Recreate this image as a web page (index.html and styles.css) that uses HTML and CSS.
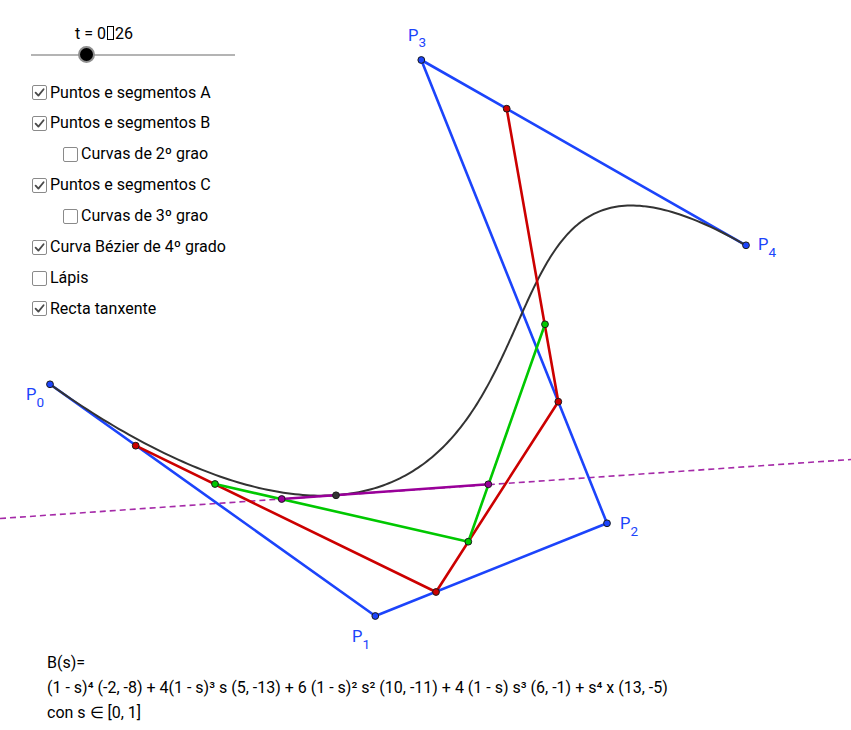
FILE: index.html
```html
<!DOCTYPE html>
<html lang="gl">
<head>
<meta charset="utf-8">
<title>Curva Bézier de 4º grado</title>
<link rel="stylesheet" href="styles.css">
</head>
<body>
<div class="stage">
  <svg class="canvas" viewBox="0 0 851 730" width="851" height="730" xmlns="http://www.w3.org/2000/svg">
    <line class="tangent" x1="0" y1="518.5" x2="851" y2="459.5"/>
    <polyline class="seg seg-blue" points="50,384.3 375.3,616 607,523.3 421.3,60 746,245.3"/>
    <path id="curve" class="curve" d=""/>
    <polyline class="seg seg-red" points="135.7,445.7 436,592 558.3,401.7 506.7,108.7"/>
    <polyline class="seg seg-green" points="215,484 468.3,541.7 545,324.3"/>
    <line class="seg seg-purple" x1="281.7" y1="499" x2="488.3" y2="484.3"/>

    <g class="pts pts-blue">
      <circle cx="50" cy="384.3" r="3.4"/>
      <circle cx="375.3" cy="616" r="3.4"/>
      <circle cx="607" cy="523.3" r="3.4"/>
      <circle cx="421.3" cy="60" r="3.4"/>
      <circle cx="746" cy="245.3" r="3.4"/>
    </g>
    <g class="pts pts-red">
      <circle cx="135.7" cy="445.7" r="3.4"/>
      <circle cx="436" cy="592" r="3.4"/>
      <circle cx="558.3" cy="401.7" r="3.4"/>
      <circle cx="506.7" cy="108.7" r="3.4"/>
    </g>
    <g class="pts pts-green">
      <circle cx="215" cy="484" r="3.4"/>
      <circle cx="468.3" cy="541.7" r="3.4"/>
      <circle cx="545" cy="324.3" r="3.4"/>
    </g>
    <g class="pts pts-purple">
      <circle cx="281.7" cy="499" r="3.4"/>
      <circle cx="488.3" cy="484.3" r="3.4"/>
    </g>
    <g class="pts pts-black">
      <circle cx="336" cy="495.3" r="3.4"/>
    </g>

    <text class="lbl" x="26" y="400">P<tspan class="sub" dy="6.5">0</tspan></text>
    <text class="lbl" x="352" y="642">P<tspan class="sub" dy="6.5">1</tspan></text>
    <text class="lbl" x="620" y="529.3">P<tspan class="sub" dy="6.5">2</tspan></text>
    <text class="lbl" x="408" y="40.7">P<tspan class="sub" dy="6.5">3</tspan></text>
    <text class="lbl" x="758" y="250">P<tspan class="sub" dy="6.5">4</tspan></text>
  </svg>

  <div class="panel">
    <div class="slider">
      <div class="slider-label">t = 0<span class="tofu"></span>26</div>
      <div class="track"><span class="knob"></span></div>
    </div>
    <ul class="checks">
      <li class="check"><span class="box on"><svg viewBox="0 0 13 13"><path d="M2.6 6.6 L5.4 9.6 L10.6 3.2"/></svg></span>Puntos e segmentos A</li>
      <li class="check"><span class="box on"><svg viewBox="0 0 13 13"><path d="M2.6 6.6 L5.4 9.6 L10.6 3.2"/></svg></span>Puntos e segmentos B</li>
      <li class="check sub-item"><span class="box"></span>Curvas de 2º grao</li>
      <li class="check"><span class="box on"><svg viewBox="0 0 13 13"><path d="M2.6 6.6 L5.4 9.6 L10.6 3.2"/></svg></span>Puntos e segmentos C</li>
      <li class="check sub-item"><span class="box"></span>Curvas de 3º grao</li>
      <li class="check"><span class="box on"><svg viewBox="0 0 13 13"><path d="M2.6 6.6 L5.4 9.6 L10.6 3.2"/></svg></span>Curva Bézier de 4º grado</li>
      <li class="check"><span class="box"></span>Lápis</li>
      <li class="check"><span class="box on"><svg viewBox="0 0 13 13"><path d="M2.6 6.6 L5.4 9.6 L10.6 3.2"/></svg></span>Recta tanxente</li>
    </ul>
  </div>

  <div class="formula">
    <div class="fline">B(s)=</div>
    <div class="fline">(1 - s)⁴ (-2, -8) + 4(1 - s)³ s (5, -13) + 6 (1 - s)² s² (10, -11) + 4 (1 - s) s³ (6, -1) + s⁴ x (13, -5)</div>
    <div class="fline">con s ∈ [0, 1]</div>
  </div>
</div>
<script src="script.js"></script>
</body>
</html>
```

FILE: styles.css
```css
html, body {
  margin: 0;
  padding: 0;
  background: #ffffff;
}

body {
  font-family: Roboto, "Liberation Sans", sans-serif;
  font-size: 16px;
  color: #000;
}

.stage {
  position: relative;
  width: 851px;
  height: 730px;
  overflow: hidden;
  display: grid;
  grid-template-rows: auto 1fr auto;
}

.canvas {
  position: absolute;
  left: 0;
  top: 0;
  z-index: 0;
}

.tangent {
  stroke: #a52aa8;
  stroke-width: 1.6;
  stroke-dasharray: 6 4;
  fill: none;
}

.seg {
  fill: none;
  stroke-width: 2.6;
  stroke-linejoin: round;
}

.seg-blue { stroke: #1c44fb; }
.seg-red { stroke: #cc0000; }
.seg-green { stroke: #00c800; }
.seg-purple { stroke: #990099; }

.curve {
  fill: none;
  stroke: #333333;
  stroke-width: 2;
}

.pts circle {
  stroke: #1a1a1a;
  stroke-width: 1;
}

.pts-blue circle { fill: #1c44fb; }
.pts-red circle { fill: #cc0000; }
.pts-green circle { fill: #00c800; }
.pts-purple circle { fill: #990099; }
.pts-black circle { fill: #333333; }

.lbl {
  font-family: Roboto, "Liberation Sans", sans-serif;
  font-size: 16.5px;
  fill: #1c44fb;
}

.lbl .sub {
  font-size: 13.5px;
}

.panel {
  position: relative;
  z-index: 1;
  padding: 24px 0 0 31px;
}

.slider {
  width: 204px;
}

.slider-label {
  line-height: 19px;
  padding-left: 44px;
}

.tofu {
  display: inline-block;
  width: 5px;
  height: 12px;
  border: 1px solid #000;
  margin: 0 1px;
  vertical-align: -1px;
  box-sizing: content-box;
}

.track {
  position: relative;
  margin-top: 11px;
  height: 2px;
  background: #b4b4b4;
}

.knob {
  position: absolute;
  left: 46.5px;
  top: -8px;
  width: 13px;
  height: 13px;
  border-radius: 50%;
  background: #000;
  border: 2.5px solid #8e8e8e;
  box-sizing: content-box;
}

.checks {
  list-style: none;
  margin: 21.5px 0 0 0;
  padding: 0;
}

.check {
  display: flex;
  align-items: center;
  line-height: 30.86px;
  height: 30.86px;
  white-space: nowrap;
}

.check.sub-item {
  padding-left: 31px;
}

.box {
  display: inline-flex;
  width: 13px;
  height: 13px;
  border: 1px solid #8a8a8a;
  border-radius: 2px;
  background: #fff;
  margin-left: 1px;
  margin-right: 3px;
  box-sizing: content-box;
}

.box svg {
  width: 13px;
  height: 13px;
}

.box svg path {
  fill: none;
  stroke: #4a4a4a;
  stroke-width: 1.8;
  stroke-linecap: round;
  stroke-linejoin: round;
}

.formula {
  position: relative;
  z-index: 1;
  grid-row: 3;
  padding: 0 0 5px 47px;
  font-size: 16px;
}

.fline {
  line-height: 25px;
  white-space: nowrap;
}
```

FILE: script.js
```js
(function () {
  var P = [[50, 384.3], [375.3, 616], [607, 523.3], [421.3, 60], [746, 245.3]];
  var C = [1, 4, 6, 4, 1];
  var n = 240;
  var d = "";
  for (var i = 0; i <= n; i++) {
    var t = i / n;
    var x = 0, y = 0;
    for (var k = 0; k < 5; k++) {
      var b = C[k] * Math.pow(1 - t, 4 - k) * Math.pow(t, k);
      x += b * P[k][0];
      y += b * P[k][1];
    }
    d += (i === 0 ? "M" : "L") + x.toFixed(2) + " " + y.toFixed(2) + " ";
  }
  document.getElementById("curve").setAttribute("d", d);
})();
```
